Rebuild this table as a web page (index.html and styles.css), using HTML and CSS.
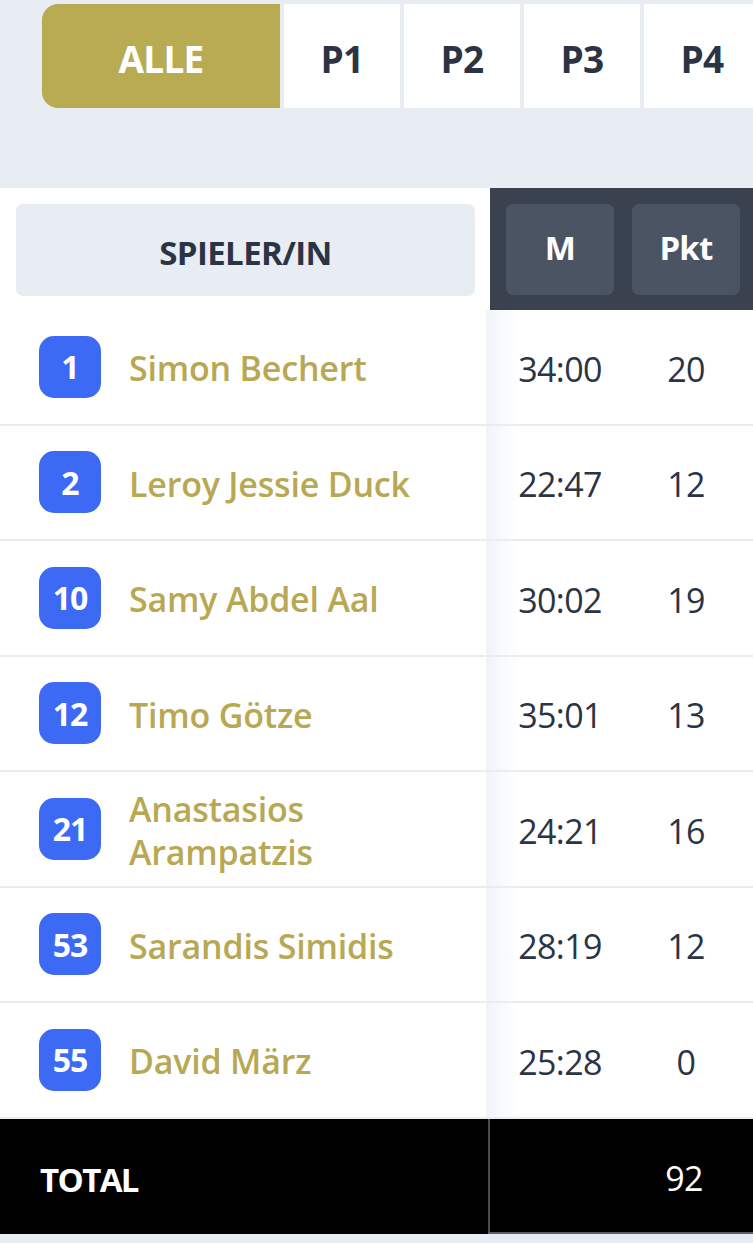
FILE: index.html
```html
<!DOCTYPE html>
<html lang="de">
<head>
<meta charset="utf-8">
<title>Statistik</title>
<link rel="stylesheet" href="styles.css">
</head>
<body>
<div class="page">
  <nav class="tabs">
    <div class="tab tab-active">ALLE</div>
    <div class="tab">P1</div>
    <div class="tab">P2</div>
    <div class="tab">P3</div>
    <div class="tab">P4</div>
  </nav>
  <div class="spacer"></div>
  <div class="table">
    <div class="row head-row">
      <div class="player-cell"><div class="head-box">SPIELER/IN</div></div>
      <div class="stats head-stats">
        <div class="stat-box">M</div>
        <div class="stat-box">Pkt</div>
      </div>
    </div>

    <div class="row data-row">
      <div class="player-cell"><span class="badge">1</span><span class="name">Simon Bechert</span></div>
      <div class="stats"><span class="val">34:00</span><span class="val">20</span></div>
    </div>
    <div class="row data-row">
      <div class="player-cell"><span class="badge">2</span><span class="name">Leroy Jessie Duck</span></div>
      <div class="stats"><span class="val">22:47</span><span class="val">12</span></div>
    </div>
    <div class="row data-row">
      <div class="player-cell"><span class="badge">10</span><span class="name">Samy Abdel Aal</span></div>
      <div class="stats"><span class="val">30:02</span><span class="val">19</span></div>
    </div>
    <div class="row data-row">
      <div class="player-cell"><span class="badge">12</span><span class="name">Timo Götze</span></div>
      <div class="stats"><span class="val">35:01</span><span class="val">13</span></div>
    </div>
    <div class="row data-row">
      <div class="player-cell"><span class="badge">21</span><span class="name">Anastasios<br>Arampatzis</span></div>
      <div class="stats"><span class="val">24:21</span><span class="val">16</span></div>
    </div>
    <div class="row data-row">
      <div class="player-cell"><span class="badge">53</span><span class="name">Sarandis Simidis</span></div>
      <div class="stats"><span class="val">28:19</span><span class="val">12</span></div>
    </div>
    <div class="row data-row">
      <div class="player-cell"><span class="badge">55</span><span class="name">David März</span></div>
      <div class="stats"><span class="val">25:28</span><span class="val">0</span></div>
    </div>

    <div class="row total-row">
      <div class="player-cell total-label">TOTAL</div>
      <div class="stats total-stats"><span class="val"></span><span class="val">92</span></div>
    </div>
  </div>
</div>
</body>
</html>
```

FILE: styles.css
```css
* { box-sizing: border-box; }

html, body {
  margin: 0;
  padding: 0;
}

body {
  background: #e8edf3;
  font-family: "Open Sans", "Noto Sans", "Liberation Sans", sans-serif;
  color: #2b3445;
  width: 753px;
  height: 1243px;
  overflow: hidden;
}

.tabs {
  display: flex;
  gap: 4px;
  padding: 4px 0 0 42px;
  height: 108px;
  overflow: hidden;
}

.tab {
  flex: 0 0 116px;
  height: 104px;
  background: #ffffff;
  display: flex;
  align-items: center;
  justify-content: center;
  padding-top: 4px;
  font-size: 37px;
  font-weight: 700;
  letter-spacing: -0.8px;
  color: #2b3445;
}

.tab-active {
  flex-basis: 238px;
  background: #b9ab51;
  color: #ffffff;
  border-radius: 16px 0 0 16px;
}

.spacer {
  height: 80px;
}

.table {
  background: #ffffff;
}

.row {
  display: flex;
}

.player-cell {
  width: 490px;
  flex: 0 0 490px;
  display: flex;
  align-items: center;
}

.stats {
  flex: 1;
  display: flex;
  align-items: center;
  gap: 18px;
  padding-left: 16px;
}

.head-row {
  height: 122px;
}

.head-row .player-cell {
  padding: 16px 15px 14px 16px;
}

.head-box {
  width: 100%;
  height: 92px;
  background: #e8edf3;
  border-radius: 7px;
  display: flex;
  align-items: center;
  justify-content: center;
  padding-top: 4px;
  font-size: 33px;
  font-weight: 700;
  letter-spacing: -0.6px;
  color: #2b3445;
}

.head-stats {
  background: #3a4250;
  padding-top: 16px;
  padding-bottom: 15px;
  align-items: stretch;
}

.stat-box {
  flex: 0 0 108px;
  background: #4b5463;
  border-radius: 7px;
  display: flex;
  align-items: center;
  justify-content: center;
  padding-bottom: 4px;
  color: #ffffff;
  font-size: 33px;
  font-weight: 700;
  letter-spacing: -0.8px;
}

.data-row {
  height: 115.5px;
  border-bottom: 2px solid #e8edf3;
  padding-top: 4px;
}

.data-row .player-cell {
  padding-left: 39px;
}

.data-row .stats {
  background: linear-gradient(to right, rgba(220, 229, 240, 0.45) 0px, rgba(236, 241, 247, 0.35) 16px, rgba(255, 255, 255, 0) 34px);
  margin-left: -4px;
  margin-top: -4px;
  padding-top: 4px;
  padding-left: 20px;
}

.badge {
  flex: 0 0 62px;
  width: 62px;
  height: 62px;
  border-radius: 15px;
  background: #3d6af5;
  color: #ffffff;
  font-size: 32px;
  font-weight: 700;
  letter-spacing: -1px;
  display: flex;
  align-items: center;
  justify-content: center;
  margin-top: -4px;
}

.name {
  margin-left: 28px;
  font-size: 34px;
  font-weight: 600;
  line-height: 43px;
  color: #b8a853;
  letter-spacing: -0.2px;
}

.val {
  flex: 0 0 108px;
  text-align: center;
  font-size: 34px;
  font-weight: 400;
  color: #2b3445;
  letter-spacing: -0.6px;
}

.total-row {
  height: 115px;
  background: #000000;
  color: #ffffff;
}

.total-label {
  padding-left: 40px;
  padding-top: 6px;
  font-size: 33px;
  font-weight: 700;
  letter-spacing: -1.6px;
  border-right: 2px solid #4a4a4a;
}

.total-stats {
  margin-left: -2px;
  padding-top: 6px;
  border-bottom: 2px solid #5a5f66;
}

.total-stats .val {
  color: #ffffff;
}
```
